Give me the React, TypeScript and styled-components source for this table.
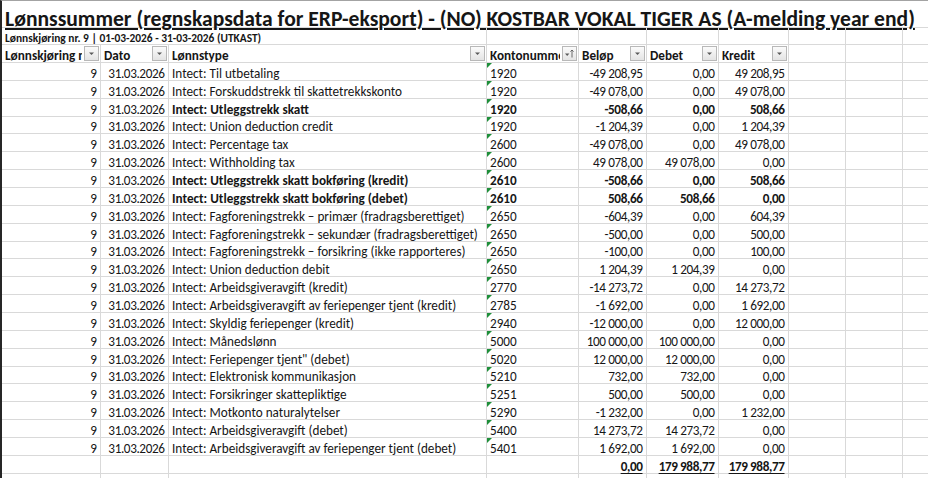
import styled, { createGlobalStyle, css } from "styled-components";

const GlobalStyle = createGlobalStyle`
  html, body {
    margin: 0;
    padding: 0;
    background: #ffffff;
  }
  body {
    font-family: Carlito, Calibri, Lato, "Liberation Sans", sans-serif;
    color: #161616;
  }
`;

const COLUMNS = "99px 68px 318px 92px 68px 72px 70px 57px 57px 1fr";
const GRID = "#d9d9d9";

const Sheet = styled.div`
  width: 928px;
  height: 478px;
  box-sizing: border-box;
  border-left: 2px solid #262626;
  border-top: 1px solid #a3a3a3;
  overflow: hidden;
`;

const Row = styled.div<{ $height: number }>`
  display: grid;
  grid-template-columns: ${COLUMNS};
  height: ${(p) => p.$height}px;
`;

type Align = "left" | "right";

const Cell = styled.div<{
  $align?: Align;
  $bold?: boolean;
  $underline?: boolean;
  $span?: string;
  $noRight?: boolean;
  $flag?: boolean;
}>`
  position: relative;
  box-sizing: border-box;
  display: flex;
  align-items: flex-end;
  justify-content: ${(p) => (p.$align === "right" ? "flex-end" : "flex-start")};
  padding: 0 3px;
  border-bottom: 1px solid ${GRID};
  border-right: ${(p) => (p.$noRight ? "none" : `1px solid ${GRID}`)};
  white-space: nowrap;
  overflow: hidden;
  font-size: 13.2px;
  line-height: 12px;
  font-weight: ${(p) => (p.$bold ? 700 : 400)};
  ${(p) => p.$span && css`grid-column: ${p.$span};`}
  ${(p) =>
    p.$underline &&
    css`
      overflow: visible;
      text-decoration: underline;
      text-decoration-thickness: 1px;
      text-underline-offset: 1.5px;
    `}
  ${(p) =>
    p.$flag &&
    css`
      &::before {
        content: "";
        position: absolute;
        left: 0;
        top: 0;
        border-top: 5px solid #1e8f3a;
        border-right: 5px solid transparent;
      }
    `}
`;

/* Excel rounds digit advances down at this zoom, so figures sit a bit tighter */
const NumCell = styled(Cell)`
  letter-spacing: -0.4px;
  padding-right: 3.5px;
`;

const TitleText = styled.div`
  grid-column: 1 / -1;
  box-sizing: border-box;
  display: flex;
  align-items: flex-end;
  padding: 0 3px;
  border-bottom: 1px solid ${GRID};
  white-space: nowrap;
  font-size: 21.6px;
  line-height: 17px;
  font-weight: 700;
  text-decoration: underline;
  text-decoration-thickness: 1.5px;
  text-underline-offset: 2px;
`;

const SubtitleText = styled(Cell)`
  font-size: 11.4px;
  font-weight: 700;
`;

const HeaderCell = styled(Cell)`
  padding: 0 1px 0 3px;
  font-weight: 700;
`;

const HeaderLabel = styled.span`
  overflow: hidden;
  flex: 1;
  min-width: 0;
  line-height: 16px;
  margin-bottom: -2px;
`;

const FilterButton = styled.span`
  flex: none;
  align-self: center;
  width: 15px;
  height: 15px;
  box-sizing: border-box;
  border: 1px solid #b8b8b8;
  background: linear-gradient(#fbfbfb, #e4e4e4);
  display: flex;
  align-items: center;
  justify-content: center;
  margin-left: 2px;
`;

const Arrow = () => (
  <svg width="9" height="9" viewBox="0 0 9 9">
    <path d="M2 3.5h5L4.5 6z" fill="#595959" />
  </svg>
);

const SortArrow = () => (
  <svg width="11" height="11" viewBox="0 0 11 11">
    <path d="M1 5.5h4.4L3.2 8z" fill="#595959" />
    <path d="M8 9.5V2M6.4 3.6L8 2l1.6 1.6" fill="none" stroke="#595959" strokeWidth="0.9" />
  </svg>
);

type Line = {
  type: string;
  account: string;
  amount: string;
  debit: string;
  credit: string;
  bold?: boolean;
};

const lines: Line[] = [
  { type: "Intect: Til utbetaling", account: "1920", amount: "-49 208,95", debit: "0,00", credit: "49 208,95" },
  { type: "Intect: Forskuddstrekk til skattetrekkskonto", account: "1920", amount: "-49 078,00", debit: "0,00", credit: "49 078,00" },
  { type: "Intect: Utleggstrekk skatt", account: "1920", amount: "-508,66", debit: "0,00", credit: "508,66", bold: true },
  { type: "Intect: Union deduction credit", account: "1920", amount: "-1 204,39", debit: "0,00", credit: "1 204,39" },
  { type: "Intect: Percentage tax", account: "2600", amount: "-49 078,00", debit: "0,00", credit: "49 078,00" },
  { type: "Intect: Withholding tax", account: "2600", amount: "49 078,00", debit: "49 078,00", credit: "0,00" },
  { type: "Intect: Utleggstrekk skatt bokføring (kredit)", account: "2610", amount: "-508,66", debit: "0,00", credit: "508,66", bold: true },
  { type: "Intect: Utleggstrekk skatt bokføring (debet)", account: "2610", amount: "508,66", debit: "508,66", credit: "0,00", bold: true },
  { type: "Intect: Fagforeningstrekk – primær (fradragsberettiget)", account: "2650", amount: "-604,39", debit: "0,00", credit: "604,39" },
  { type: "Intect: Fagforeningstrekk – sekundær (fradragsberettiget)", account: "2650", amount: "-500,00", debit: "0,00", credit: "500,00" },
  { type: "Intect: Fagforeningstrekk – forsikring (ikke rapporteres)", account: "2650", amount: "-100,00", debit: "0,00", credit: "100,00" },
  { type: "Intect: Union deduction debit", account: "2650", amount: "1 204,39", debit: "1 204,39", credit: "0,00" },
  { type: "Intect: Arbeidsgiveravgift (kredit)", account: "2770", amount: "-14 273,72", debit: "0,00", credit: "14 273,72" },
  { type: "Intect: Arbeidsgiveravgift av feriepenger tjent (kredit)", account: "2785", amount: "-1 692,00", debit: "0,00", credit: "1 692,00" },
  { type: "Intect: Skyldig feriepenger (kredit)", account: "2940", amount: "-12 000,00", debit: "0,00", credit: "12 000,00" },
  { type: "Intect: Månedslønn", account: "5000", amount: "100 000,00", debit: "100 000,00", credit: "0,00" },
  { type: "Intect: Feriepenger tjent\" (debet)", account: "5020", amount: "12 000,00", debit: "12 000,00", credit: "0,00" },
  { type: "Intect: Elektronisk kommunikasjon", account: "5210", amount: "732,00", debit: "732,00", credit: "0,00" },
  { type: "Intect: Forsikringer skattepliktige", account: "5251", amount: "500,00", debit: "500,00", credit: "0,00" },
  { type: "Intect: Motkonto naturalytelser", account: "5290", amount: "-1 232,00", debit: "0,00", credit: "1 232,00" },
  { type: "Intect: Arbeidsgiveravgift (debet)", account: "5400", amount: "14 273,72", debit: "14 273,72", credit: "0,00" },
  { type: "Intect: Arbeidsgiveravgift av feriepenger tjent (debet)", account: "5401", amount: "1 692,00", debit: "1 692,00", credit: "0,00" },
];

const headers = ["Lønnskjøring nr.", "Dato", "Lønnstype", "Kontonummer", "Beløp", "Debet", "Kredit"];

const ROW_H = 17.86;

const EmptyTail = () => (
  <>
    <Cell />
    <Cell />
    <Cell $noRight />
  </>
);

export default function App() {
  return (
    <>
      <GlobalStyle />
      <Sheet>
        <Row $height={27}>
          <TitleText>
            Lønnssummer (regnskapsdata for ERP-eksport) - (NO) KOSTBAR VOKAL TIGER AS (A-melding year end)
          </TitleText>
        </Row>

        <Row $height={17}>
          <SubtitleText $span="1 / 4">
            Lønnskjøring nr. 9 | 01-03-2026 - 31-03-2026 (UTKAST)
          </SubtitleText>
          <Cell />
          <Cell />
          <Cell />
          <Cell />
          <EmptyTail />
        </Row>

        <Row $height={18}>
          {headers.map((h) => (
            <HeaderCell key={h}>
              <HeaderLabel>{h}</HeaderLabel>
              <FilterButton>{h === "Kontonummer" ? <SortArrow /> : <Arrow />}</FilterButton>
            </HeaderCell>
          ))}
          <EmptyTail />
        </Row>

        {lines.map((l, i) => (
          <Row key={i} $height={ROW_H}>
            <NumCell $align="right">9</NumCell>
            <NumCell $align="right">31.03.2026</NumCell>
            <Cell $bold={l.bold}>{l.type}</Cell>
            <Cell $bold={l.bold} $flag>
              {l.account}
            </Cell>
            <NumCell $align="right" $bold={l.bold}>
              {l.amount}
            </NumCell>
            <NumCell $align="right" $bold={l.bold}>
              {l.debit}
            </NumCell>
            <NumCell $align="right" $bold={l.bold}>
              {l.credit}
            </NumCell>
            <EmptyTail />
          </Row>
        ))}

        <Row $height={ROW_H}>
          <Cell />
          <Cell />
          <Cell />
          <Cell />
          <NumCell $align="right" $bold $underline>
            0,00
          </NumCell>
          <NumCell $align="right" $bold $underline>
            179 988,77
          </NumCell>
          <NumCell $align="right" $bold $underline>
            179 988,77
          </NumCell>
          <EmptyTail />
        </Row>

        <Row $height={ROW_H}>
          <Cell />
          <Cell />
          <Cell />
          <Cell />
          <Cell />
          <Cell />
          <Cell />
          <EmptyTail />
        </Row>
      </Sheet>
    </>
  );
}
